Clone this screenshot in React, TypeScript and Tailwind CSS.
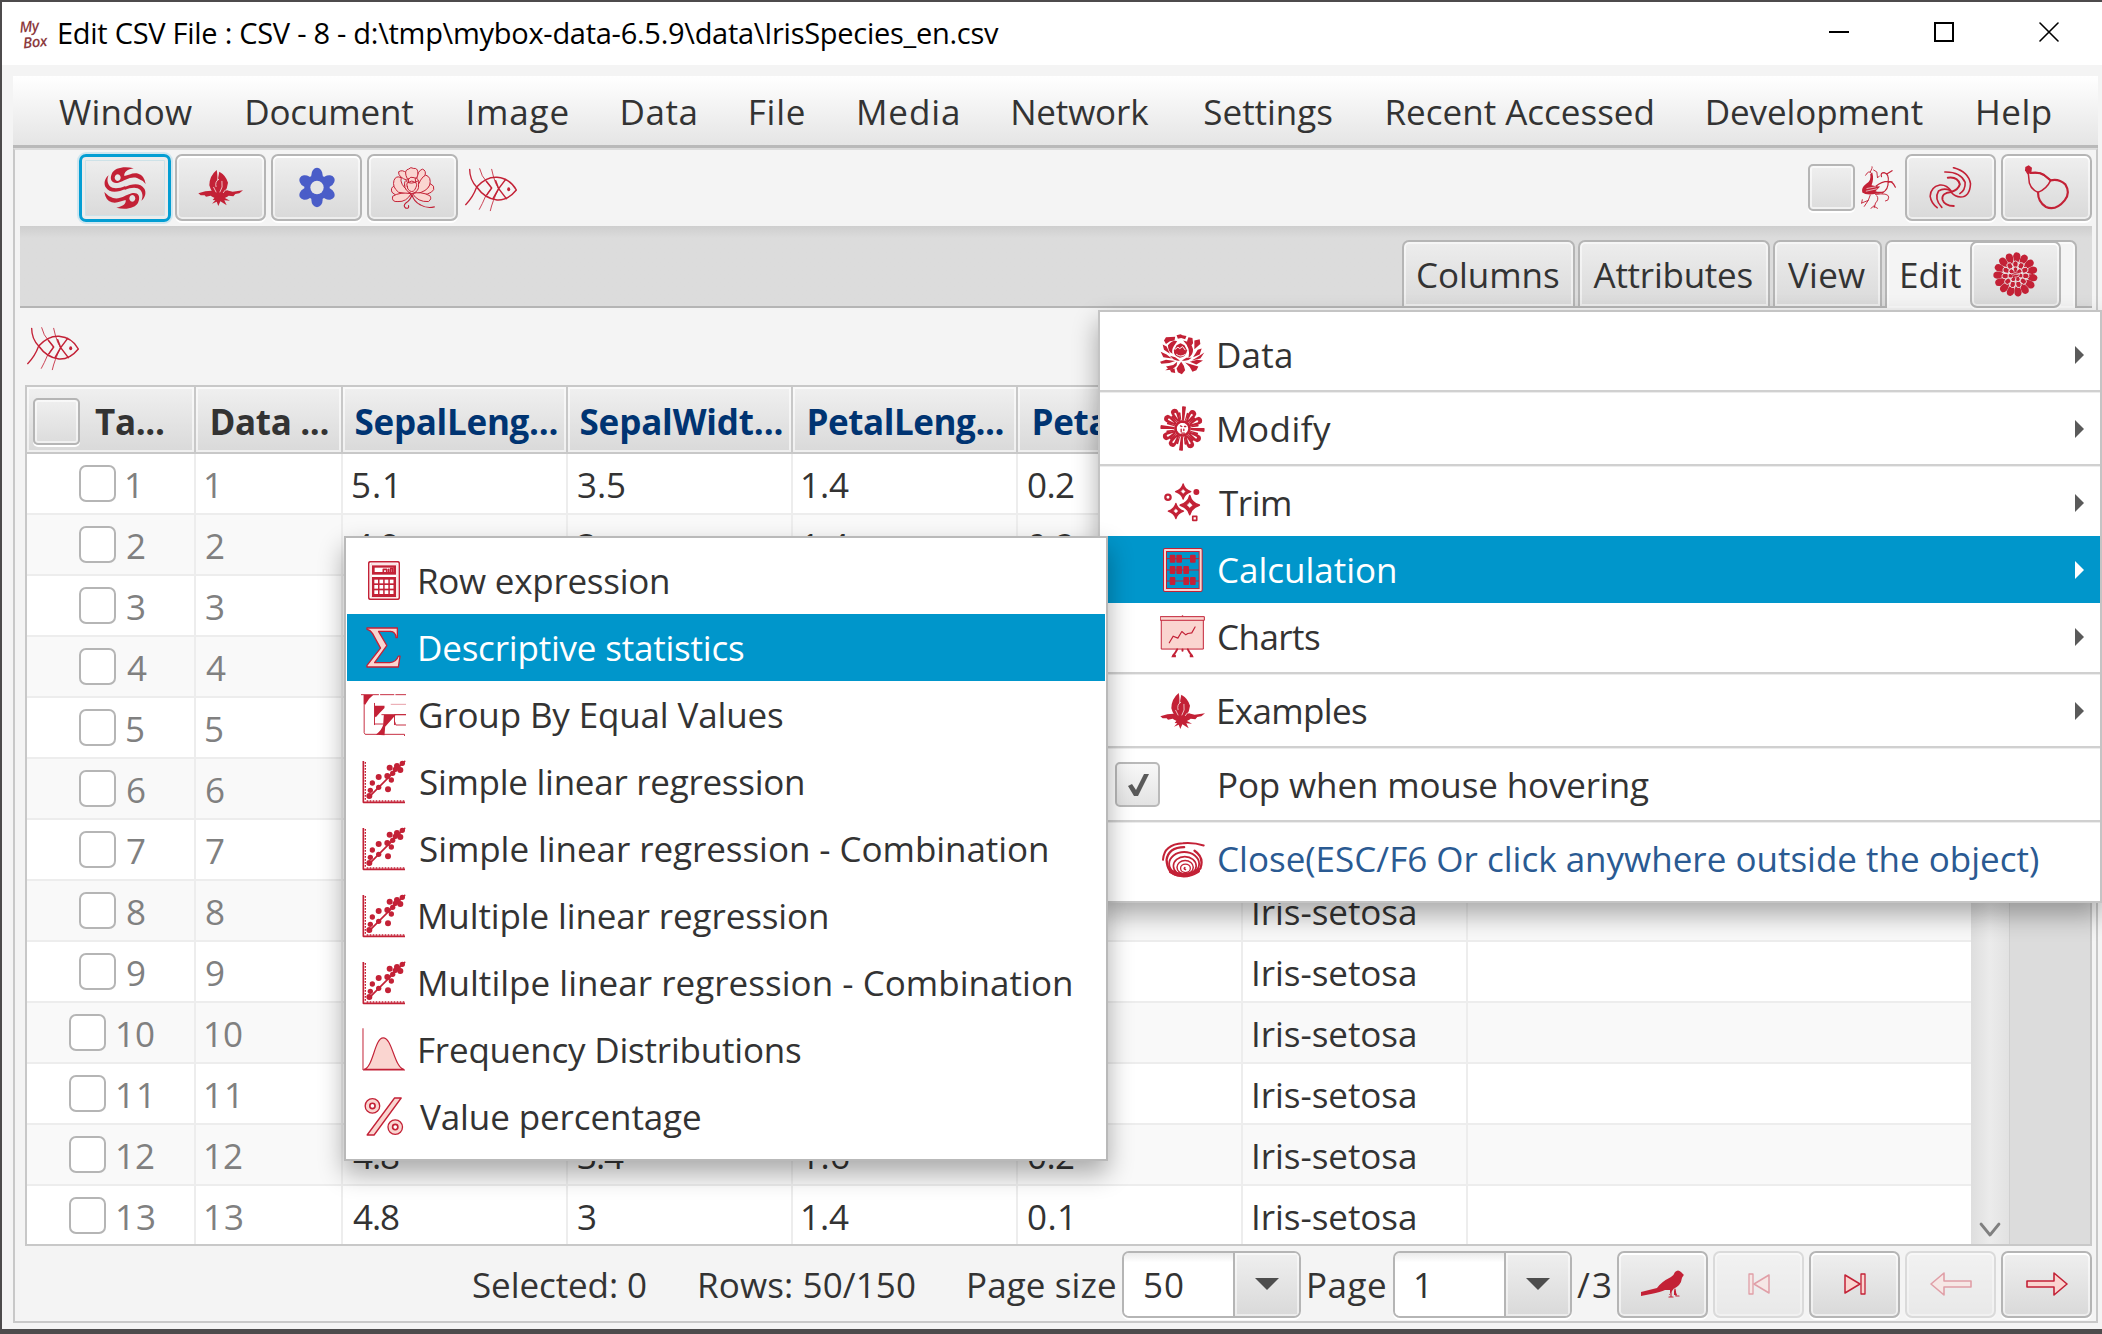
import React from "react";

const RED = "#c32136";
const PINK = "#fad5d0";
const FAMILY = '"Open Sans", "Noto Sans", sans-serif';

const measureContext = document.createElement("canvas").getContext("2d")!;

/** A single line of text whose inked width is fitted to `w` pixels. */
function T({ children, w, size = 35, bold = false }: { children: string; w: number; size?: number; bold?: boolean }) {
  measureContext.font = `${bold ? 700 : 400} ${size}px ${FAMILY}`;
  const m = measureContext.measureText(children);
  const ink = m.actualBoundingBoxLeft + m.actualBoundingBoxRight;
  const spacing = children.length > 1 ? (w - ink) / (children.length - 1) : 0;
  return (
    <span className="block shrink-0 whitespace-nowrap" style={{ width: w }}>
      <span
        className="block"
        style={{
          fontFamily: FAMILY,
          fontSize: size,
          fontWeight: bold ? 700 : 400,
          letterSpacing: spacing,
          marginLeft: m.actualBoundingBoxLeft,
        }}
      >
        {children}
      </span>
    </span>
  );
}

type IconProps = { className?: string };

function Svg({ box, className = "", children }: { box: string; className?: string; children: React.ReactNode }) {
  return (
    <svg viewBox={box} className={`shrink-0 ${className}`} fill="none" strokeLinecap="round" strokeLinejoin="round">
      {children}
    </svg>
  );
}

const SwirlFish = () => (
  <Svg box="0 0 132 132" className="h-[44px] w-[44px]">
    {[0, 180].map((a) => (
      <g key={a} transform={`rotate(${a} 66 66)`} fill={RED}>
        <path
          fillRule="evenodd"
          d="M92 7C66 0 34 4 26 24C18 44 30 54 46 50C66 44 82 30 102 36Q118 42 128 54Q124 28 106 23C88 19 78 28 64 30C62 18 74 10 92 7ZM44 25a9 10 0 1 0 .1 0Z"
        />
        <path d="M17 28C4 38 2 54 8 64C20 84 48 78 67 69V60C48 68 30 70 20 60C12 50 12 38 17 28Z" />
      </g>
    ))}
  </Svg>
);

const Leaf = ({ className = "h-[36px] w-[45px]" }: IconProps) => (
  <Svg box="0 0 135 108" className={className}>
    <g fill={RED}>
      <path d="M56 0Q34 18 34 46Q40 70 62 84Q86 70 90 38Q84 16 64 5L60 22Z" />
      <path d="M64 84Q52 58 40 62L22 64L1 70L8 76L20 76L24 80L38 77Q46 84 64 88Z" />
      <path d="M62 84Q80 56 92 62L104 65L135 61L124 70L112 72L106 79L92 77Q86 84 64 88Z" />
      <path d="M52 80L44 90L52 91L42 101L56 95L61 108L67 94L86 106L79 91L96 92L74 80Z" />
    </g>
    <path d="M60 6L59 30M54 50Q50 34 62 28M72 34Q76 52 66 66M54 66L47 52M82 60L76 68" stroke="#f4dcdc" strokeWidth="2.5" />
  </Svg>
);

const Gear = () => (
  <Svg box="0 0 108 122" className="h-[41px] w-[36px]">
    <g fill="#4a5dc8">
      {[0, 60, 120, 180, 240, 300].map((a) => (
        <ellipse key={a} transform={`rotate(${a} 54 61)`} cx="54" cy="24" rx="17" ry="22" />
      ))}
      <circle cx="54" cy="61" r="38" />
    </g>
    <circle cx="54" cy="61" r="20" fill="#e5e5e5" />
  </Svg>
);

const Peony = () => (
  <Svg box="0 0 136 126" className="h-[42px] w-[45px]">
    <g fill={PINK} stroke={RED} strokeWidth="3">
      <path d="M80 36Q84 10 98 6Q110 10 106 24Q104 40 84 50Z" />
      <path d="M52 40Q24 30 26 14Q38 6 50 18Q60 30 58 44Z" />
      <path d="M48 24Q44 8 56 6Q62-2 72 4Q82 2 84 14Q86 24 80 34L54 36Z" />
      <path d="M62 78Q24 80 14 56Q0 62 6 76Q22 94 62 84Z" />
      <path d="M80 76Q110 74 122 50Q136 56 132 68Q122 86 78 84Z" />
      <path d="M56 74Q28 50 34 32Q18 24 12 40Q6 60 26 76L60 82Z" />
      <path d="M78 72Q92 30 108 24Q126 30 120 54Q112 74 80 80Z" />
      <path d="M64 80Q30 74 8 88Q4 106 24 104Q50 106 64 80Z" />
      <path d="M68 80Q92 72 120 86Q128 96 116 104Q84 106 68 80Z" />
      <path d="M44 54Q42 40 54 38Q62 26 74 32Q90 34 86 52Q90 74 66 80Q44 72 44 54Z" />
      <path d="M52 58Q48 48 56 46Q66 38 76 46Q84 50 78 62Q72 78 60 72Q52 68 52 58Z" />
      <path d="M50 44Q64 54 84 42M56 46V36M78 46L76 34" fill="none" />
    </g>
    <path d="M66 82Q72 104 92 114Q112 126 134 120M66 84Q62 100 48 108Q38 118 48 124Q58 126 56 116" stroke={RED} strokeWidth="3.5" />
  </Svg>
);

const FishBone = () => (
  <Svg box="0 0 156 132" className="h-[44px] w-[52px]">
    <g stroke={RED}>
      <path d="M35 57Q64 26 96 28Q136 32 154 66Q128 98 96 96Q60 92 35 57Z" strokeWidth="4.5" />
      <path d="M35 57Q14 36 14 4M35 57Q24 88 2 110" strokeWidth="4" />
      <path d="M44 2Q50 26 64 40L80 60L62 84Q52 108 43 124" strokeWidth="2.5" />
      <path d="M80 4Q84 24 92 46L101 62Q82 100 76 128" strokeWidth="2.5" />
      <path d="M64 40L80 60L66 80M92 38L101 62L84 92M122 34L101 62L124 92" strokeWidth="4.5" />
    </g>
    <ellipse cx="131" cy="64" rx="4.5" ry="6" fill={RED} />
  </Svg>
);

const Phoenix = () => (
  <Svg box="0 0 110 130" className="h-[43px] w-[37px]">
    <path d="M30 24Q34 44 18 54Q2 66 6 80Q18 90 48 84Q64 84 72 76Q58 80 46 76L60 62Q50 62 34 58Q42 40 36 20Z" fill={RED} />
    <g stroke={RED} strokeWidth="2.8">
      <path d="M34 22Q26 10 16 28M30 18Q38 4 36 2M40 12L50 18L52 36L58 30" />
      <path d="M66 82Q86 70 84 48Q88 24 72 20Q60 20 64 32M80 24L96 14M84 50Q96 42 106 64M46 62Q70 42 96 48" strokeWidth="3.6" />
      <path d="M46 86Q84 80 86 94Q86 106 76 106M30 88L24 104L4 112M4 112L6 102M50 90Q58 100 46 112L42 126M42 120L32 128M42 122L52 128M24 104L12 122" />
    </g>
    <path d="M20 68L46 63M18 76L50 69" stroke="#f4f4f4" strokeWidth="2" />
  </Svg>
);

const Whirl = () => (
  <Svg box="0 0 128 126" className="h-[42px] w-[43px]">
    <g stroke={RED} strokeWidth="4.8">
      <path d="M73 2Q118 14 124 50Q122 90 94 90Q78 90 66 76" />
      <path d="M47 15Q94 14 108 46Q109 70 92 80" />
      <path d="M56 32Q86 28 92 52Q88 68 66 75" strokeWidth="6" />
      <path d="M66 72Q52 52 32 54Q4 60 3 88Q6 108 24 122" />
      <path d="M62 70Q44 62 28 72Q14 96 38 121" />
      <path d="M66 75Q36 78 40 98Q46 116 74 117" strokeWidth="5.5" />
    </g>
  </Svg>
);

const Gourd = () => (
  <Svg box="0 0 138 138" className="h-[46px] w-[46px]">
    <path d="M4 6L14 1L24 8L22 24L10 28L3 16Z" fill={RED} />
    <path d="M22 24Q48 22 60 30L80 46Q68 72 42 82Q22 74 16 54L13 26" stroke={RED} strokeWidth="4.5" />
    <path d="M20 24Q46 20 60 30L80 46M80 46Q104 40 124 58Q140 84 122 106Q96 138 66 126Q42 112 42 82" stroke={RED} strokeWidth="6.5" />
  </Svg>
);

const Mum = () => (
  <Svg box="0 0 136 136" className="h-[45px] w-[45px]">
    <g fill={RED}>
      {Array.from({ length: 15 }, (_, i) => (
        <path key={i} transform={`rotate(${i * 24 + 4} 68 68)`} d="M68 38Q57 26 57 12Q60 0 68 1Q78 1 79 12Q79 26 68 38Z" />
      ))}
      {Array.from({ length: 11 }, (_, i) => (
        <ellipse key={i} transform={`rotate(${i * 32.7} 68 68)`} cx="68" cy="37" rx="8.5" ry="10" stroke="#ececec" strokeWidth="2.5" />
      ))}
      {Array.from({ length: 7 }, (_, i) => (
        <ellipse key={i} transform={`rotate(${i * 51.4} 68 68)`} cx="68" cy="53" rx="7.5" ry="8" stroke="#ececec" strokeWidth="2.5" />
      ))}
      <circle cx="68" cy="68" r="10" />
    </g>
    <path d="M56 66Q66 58 80 66Q80 76 66 76M60 70Q68 66 76 68" stroke="#eee" strokeWidth="2" />
  </Svg>
);

const Rose = () => (
  <Svg box="0 0 136 124" className="h-[41px] w-[45px]">
    <g fill={RED}>
      <path d="M50 4L62 1L68 4L80 6L76 16L64 12L54 14Z" />
      <path d="M46 8L18 10L12 20L18 30L30 22L44 20Z" />
      <path d="M86 10Q76 32 88 44L100 28L98 12Z" />
      <path d="M104 20L120 16L122 30L104 46Z" />
      <path d="M24 34Q40 16 52 22L42 36Q34 48 38 60Q24 54 24 34Z" />
      <path d="M70 20Q94 24 100 46Q100 64 86 72Q94 44 70 20Z" />
      <path d="M50 34L62 28L74 34L82 50Q78 70 60 72Q40 66 42 50Z" />
      <path d="M8 32L20 38L30 60L12 48ZM2 54L20 62L36 74L10 70ZM0 84L18 78L46 82L28 88L4 90Z" />
      <path d="M126 44L114 48L100 70L120 62ZM134 56L110 72L96 80L122 74ZM130 80L112 78L90 84L110 92Z" />
      <path d="M30 66L46 70L60 80Q44 84 30 66ZM66 80L80 72L96 72Q84 84 66 80Z" />
      <path d="M52 84L40 94L18 98L24 104L16 110L36 108L50 96ZM58 92L64 84L72 96L76 110L66 122L54 116L50 104ZM76 86L90 100L98 114L110 110L116 98L100 94Z" />
      <path d="M30 108L44 104L46 118L34 116Z" />
    </g>
    <path d="M46 46L54 40L60 44L68 38L76 48M50 62Q62 72 76 62" stroke="#fff" strokeWidth="3" />
  </Svg>
);

const Daisy = () => (
  <Svg box="0 0 136 136" className="h-[45px] w-[45px]">
    {[0, 30, 60, 90, 120, 150, 180, 210, 240, 270, 300, 330].map((a, i) => (
      <g key={a} transform={`rotate(${a + 4} 68 68)`}>
        {i % 3 === 0 ? (
          <path d="M65 44L62 2Q68 0 74 2L71 44Z" fill={RED} />
        ) : (
          <>
            <path d="M64 44Q54 20 58 8Q68-2 78 8Q82 20 72 44Z" fill={RED} />
            <path d="M68 38L65 18Q68 12 71 18Z" fill="#fff" />
          </>
        )}
        <path transform="rotate(15 68 68)" d="M67 46L65 20Q68 16 71 20L69 46Z" fill={RED} />
      </g>
    ))}
    <circle cx="68" cy="68" r="21" stroke={RED} strokeWidth="8" strokeDasharray="9 3" />
    <circle cx="68" cy="68" r="15" fill="#fff" />
    <path d="M62 60L66 62M74 62H78M64 70V78M72 70V74M66 82H74" stroke={RED} strokeWidth="4" />
  </Svg>
);

const Sparkles = () => (
  <Svg box="0 0 112 118" className="h-[39px] w-[37px]">
    {[
      [58, 26, 1],
      [78, 67, 1.25],
      [36, 85, 1],
    ].map(([x, y, s]) => (
      <g key={x} transform={`translate(${x} ${y}) scale(${s})`}>
        <path d="M0-23Q4-6 23 0Q4 6 0 23Q-4 6-23 0Q-4-6 0-23Z" fill={RED} stroke={RED} strokeWidth="4" />
        <path d="M0-6L6 0L0 6L-6 0Z" fill="#fff" stroke="#fff" />
      </g>
    ))}
    <circle cx="12" cy="43" r="8" stroke={RED} strokeWidth="7" />
    <circle cx="98" cy="27" r="9" fill={RED} />
    <rect x="87" y="101" width="12" height="12" stroke={RED} strokeWidth="5" />
  </Svg>
);

const Abacus = () => (
  <Svg box="0 0 120 132" className="h-[44px] w-[40px]">
    <rect x="6" y="6" width="107" height="120" stroke={RED} strokeWidth="12" />
    <rect x="6" y="6" width="107" height="120" stroke={PINK} strokeWidth="6" />
    <path d="M12 32H107M12 66H107M12 99H107" stroke={RED} strokeWidth="3" />
    <g fill={RED}>
      {[
        [20, 20], [40, 20], [81, 20],
        [20, 54], [40, 54], [61, 54],
        [20, 87], [61, 87], [81, 87],
      ].map(([x, y]) => (
        <rect key={`${x}-${y}`} x={x} y={y} width="17" height="24" rx="3" />
      ))}
    </g>
  </Svg>
);

const Board = () => (
  <Svg box="0 0 136 130" className="h-[43px] w-[45px]">
    <path d="M66 1H70V5H66Z" fill={RED} />
    <rect x="5" y="12" width="126" height="91" fill={PINK} stroke={RED} strokeWidth="3" />
    <rect x="2" y="5" width="132" height="11" fill={PINK} stroke={RED} strokeWidth="3" />
    <path d="M28 84L40 64L54 70L66 50L78 60L84 56L96 54L106 36" stroke={RED} strokeWidth="3.5" />
    <path d="M52 104Q46 116 40 122M84 104Q90 116 96 122M68 104V108" stroke={RED} strokeWidth="6" />
    <path d="M34 128H48V120H38ZM90 120H98L102 128H90Z" fill={RED} />
  </Svg>
);

const Spiral = () => (
  <Svg box="0 0 132 110" className="h-[37px] w-[43px]">
    <g stroke={RED}>
      <path d="M3 56Q6 8 64 5Q98 2 128 12" strokeWidth="6" />
      <path d="M68 17Q20 18 14 56Q16 96 48 104Q96 110 118 82Q130 48 100 28" strokeWidth="7" />
      <ellipse cx="68" cy="68" rx="46" ry="36" strokeWidth="5.5" />
      <ellipse cx="70" cy="75" rx="35" ry="29" strokeWidth="5" />
      <ellipse cx="71" cy="79" rx="25" ry="21" strokeWidth="4.5" />
      <ellipse cx="72" cy="82" rx="15" ry="13" strokeWidth="4" />
      <path d="M72 86Q66 84 70 80" strokeWidth="5" />
      <path d="M28 92Q68 116 110 90" strokeWidth="13" />
    </g>
  </Svg>
);

const Calculator = () => (
  <Svg box="0 0 96 117" className="h-[39px] w-[32px]">
    <rect x="2" y="2" width="92" height="113" rx="6" fill="#fff" stroke={RED} strokeWidth="4.5" />
    <rect x="9" y="9" width="78" height="99" rx="2" stroke="#f3b5b8" strokeWidth="2" />
    <rect x="12" y="13" width="72" height="28" fill={RED} />
    <rect x="20" y="20" width="56" height="13" fill="#fff" />
    <path d="M46 32V25H56V32M62 32V25M68 32V22H74V32" stroke={RED} strokeWidth="5" />
    <rect x="12" y="48" width="72" height="60" fill={RED} />
    {[0, 1, 2].map((r) =>
      [0, 1, 2, 3].map((c) => <rect key={`${r}${c}`} x={19 + c * 15.5} y={56 + r * 16} width="11" height="11" fill="#fff" />)
    )}
  </Svg>
);

const Sigma = () => (
  <Svg box="0 0 106 124" className="h-[41px] w-[35px]">
    <path
      d="M3 3H95V32H91Q90 14 74 13H38L63 56L26 108H72Q92 106 98 88L103 88L98 121H3V116L44 64L20 20Q12 8 3 7Z"
      fill={PINK}
      stroke={RED}
      strokeWidth="4"
    />
  </Svg>
);

const Groups = () => (
  <Svg box="0 0 134 126" className="h-[42px] w-[45px]">
    <g stroke={RED} strokeWidth="2.8">
      <path d="M0 2H52M58 2H98M104 2H134M9 4V116L12 121H50M54 121H130V125M40 28V90H66M40 90V92M100 92V62H134M100 82L104 93H134M62 62H134" />
      <path d="M90 31H134" stroke="#e79aa2" />
    </g>
    <g fill={RED}>
      <path d="M8 3H36L24 14L12 32L8 30Z" />
      <path d="M40 35H70V42L56 56L44 70L40 66Z" />
      <path d="M68 62H104L90 78L72 98L70 124L44 122Q62 108 66 92Z" />
    </g>
  </Svg>
);

const Scatter = () => (
  <Svg box="0 0 132 132" className="h-[44px] w-[44px]">
    <path d="M4 3V127H129" stroke={RED} strokeWidth="5" strokeLinecap="butt" />
    <path d="M10 6V120M14 123H128" stroke={RED} strokeWidth="4" strokeDasharray="5 4" strokeLinecap="butt" />
    <path d="M20 112L128 4" stroke={RED} strokeWidth="5" />
    <g fill={RED}>
      {[
        [22, 108, 9], [25, 91, 8], [31, 69, 8], [50, 51, 9], [50, 82, 8], [78, 88, 9], [76, 48, 9], [83, 23, 9],
        [88, 60, 8], [92, 40, 8], [105, 18, 9], [115, 30, 9], [121, 10, 8], [100, 28, 8],
      ].map(([x, y, r]) => (
        <circle key={`${x}-${y}`} cx={x} cy={y} r={r} />
      ))}
    </g>
  </Svg>
);

const Bell = () => (
  <Svg box="0 0 130 130" className="h-[43px] w-[43px]">
    <path d="M6 125C34 120 38 30 64 30C92 30 96 116 126 125Z" fill={PINK} stroke={RED} strokeWidth="3.5" />
    <path d="M3 2V127H129" stroke={RED} strokeWidth="3" />
  </Svg>
);

const Percent = () => (
  <Svg box="0 0 120 118" className="h-[39px] w-[40px]">
    <g fill={PINK} stroke={RED} strokeWidth="4">
      <path d="M92 3H112L30 115H9Z" />
      <circle cx="25" cy="27" r="22" />
      <circle cx="94" cy="91" r="22" />
      <circle cx="25" cy="27" r="8" fill="#fff" strokeWidth="5" />
      <circle cx="94" cy="91" r="8" fill="#fff" strokeWidth="5" />
    </g>
  </Svg>
);

const Bird = () => (
  <Svg box="0 0 44 28" className="h-[28px] w-[44px]">
    <path
      d="M43 5L40 2Q37-1 34 2Q33 5 30 7Q20 12 16 18L0 22V26L10 24Q20 22 24 20H29V25H28M33 19V25H36M29 20Q37 18 40 12Q41 6 43 5Z"
      fill={RED}
    />
    <path d="M30 20V26M34 19L35 26M32 27H28M38 26H35" stroke={RED} strokeWidth="1.2" />
  </Svg>
);

const SkipLast = () => (
  <Svg box="0 0 22 22" className="h-[22px] w-[22px]">
    <path d="M1 2L16 11L1 20Z" fill={PINK} stroke={RED} strokeWidth="1.5" />
    <rect x="17" y="1" width="4" height="20" fill={PINK} stroke={RED} strokeWidth="1.3" />
  </Svg>
);

const Arrow = () => (
  <Svg box="0 0 42 26" className="h-[26px] w-[42px]">
    <path d="M1 10H28V2L41 13L28 24V16H1Z" fill={PINK} stroke={RED} strokeWidth="1.6" />
  </Svg>
);

const BUTTON =
  "flex h-[67px] w-[91px] shrink-0 items-center justify-center rounded-[7px] border-2 border-[#b5b5b5] bg-gradient-to-b from-[#efefef] to-[#d9d9d9] shadow-[inset_0_0_0_2px_rgba(255,255,255,0.55),inset_0_2px_0_white,0_2px_0_white]";

function IconButton({ children, disabled = false }: { children: React.ReactNode; disabled?: boolean }) {
  return (
    <button className={disabled ? `${BUTTON} opacity-40` : BUTTON}>{children}</button>
  );
}

const CHECK =
  "h-[47px] w-[47px] shrink-0 rounded-[5px] border-2 border-[#b5b5b5] bg-gradient-to-b from-[#efefef] to-[#dcdcdc] shadow-[inset_0_0_0_2px_rgba(255,255,255,0.6),0_2px_0_white]";

const MENU: [string, number][] = [
  ["Window", 133], ["Document", 166], ["Image", 99], ["Data", 73], ["File", 53], ["Media", 99],
  ["Network", 136], ["Settings", 128], ["Recent Accessed", 265], ["Development", 215], ["Help", 73],
];

const ROWS: { values: string[]; species: string }[] = [
  { values: ["5.1", "3.5", "1.4", "0.2"], species: "" },
  { values: ["4.9", "3", "1.4", "0.2"], species: "" },
  { values: ["", "", "", ""], species: "" },
  { values: ["", "", "", ""], species: "" },
  { values: ["", "", "", ""], species: "" },
  { values: ["", "", "", ""], species: "" },
  { values: ["", "", "", ""], species: "" },
  { values: ["", "", "", ""], species: "Iris-setosa" },
  { values: ["", "", "", ""], species: "Iris-setosa" },
  { values: ["", "", "", ""], species: "Iris-setosa" },
  { values: ["", "", "", ""], species: "Iris-setosa" },
  { values: ["4.8", "3.4", "1.6", "0.2"], species: "Iris-setosa" },
  { values: ["4.8", "3", "1.4", "0.1"], species: "Iris-setosa" },
];

const COLS = "grid grid-cols-[169px_147px_225px_225px_225px_225px_225px_503px]";

function numberWidth(s: string) {
  if (s === "1") return 10;
  if (s === "11") return 31;
  if (s.includes(".")) return s.endsWith("1") ? 42 : 46;
  return s.length === 2 ? 36 : 17;
}

function HeaderCell({ text, w, dark = false }: { text: string; w: number; dark?: boolean }) {
  return (
    <div className={`flex items-center justify-center border-r-2 border-[#c8c8c8] pt-[6px] pl-[3px] shadow-[inset_0_0_0_2px_rgba(255,255,255,0.6)] ${dark ? "text-[#333]" : "text-[#003472]"}`}>
      {text && <T w={w} bold>{text}</T>}
    </div>
  );
}

function DataTable() {
  return (
    <div className="h-[861px] w-[1985px] shrink-0 overflow-hidden border-2 border-r-0 border-[#c8c8c8] bg-white">
      <div className="flex">
        <div className="w-[1944px] shrink-0 overflow-hidden">
          <div className={`${COLS} h-[67px] border-b-2 border-[#c8c8c8] bg-gradient-to-b from-[#f0f0f0] to-[#d9d9d9]`}>
            <div className="flex items-center gap-[15px] border-r-2 border-[#c8c8c8] pt-[3px] pl-[6px] text-[#333] shadow-[inset_0_0_0_2px_rgba(255,255,255,0.6)]">
              <div className={CHECK} />
              <div className="pt-[3px]"><T w={68} bold>Ta...</T></div>
            </div>
            <HeaderCell text="Data ..." w={115} dark />
            <HeaderCell text="SepalLeng..." w={201} />
            <HeaderCell text="SepalWidt..." w={201} />
            <HeaderCell text="PetalLeng..." w={193} />
            <HeaderCell text="PetalWidt..." w={193} />
            <HeaderCell text="" w={0} />
            <HeaderCell text="" w={0} />
          </div>
          {ROWS.map(({ values, species }, i) => {
            const id = String(i + 1);
            return (
              <div key={id} className={`${COLS} h-[61px] leading-[57px] text-[#333] ${i % 2 ? "bg-[#f9f9f9]" : "bg-white"}`}>
                <div className={`flex items-center border-r-2 border-b-2 border-[#ededed] text-[#808080] ${id.length === 1 ? "gap-[11px] pl-[52px]" : "gap-[12px] pl-[42px]"}`}>
                  <div className="h-[37px] w-[37px] shrink-0 rounded-[7px] border-2 border-[#b5b5b5] bg-white" />
                  <div className="pt-[2px]"><T w={numberWidth(id)}>{id}</T></div>
                </div>
                <div className="border-r-2 border-b-2 border-[#ededed] pt-[2px] pl-[10px] text-[#808080]">
                  <T w={numberWidth(id)}>{id}</T>
                </div>
                {values.map((v, c) => (
                  <div key={c} className="border-r-2 border-b-2 border-[#ededed] pt-[2px] pl-[10px]">
                    {v && <T w={numberWidth(v)}>{v}</T>}
                  </div>
                ))}
                <div className="border-r-2 border-b-2 border-[#ededed] pt-[2px] pl-[11px]">
                  {species && <T w={161}>{species}</T>}
                </div>
                <div className="border-b-2 border-[#ededed]" />
              </div>
            );
          })}
        </div>
        <div className="flex h-[857px] w-[39px] shrink-0 items-end justify-center border-r border-[#d0d0d0] bg-gradient-to-r from-[#dedede] via-[#ebebeb] to-[#e2e2e2] pb-[6px]">
          <Svg box="0 0 22 16" className="h-[16px] w-[22px]">
            <path d="M2 2L11 13L20 2" stroke="#808080" strokeWidth="2.8" />
          </Svg>
        </div>
      </div>
    </div>
  );
}

function Combo({ value, w }: { value: string; w: number }) {
  return (
    <div className="flex h-[67px] w-[179px] shrink-0 overflow-hidden rounded-[7px] border-2 border-[#b5b5b5] bg-white shadow-[0_2px_0_white]">
      <div className="flex w-[109px] items-center bg-gradient-to-b from-[#ebebeb] via-white via-15% to-white pt-[2px] pl-[21px]">
        <T w={w}>{value}</T>
      </div>
      <div className="flex flex-1 items-center justify-center border-l-2 border-[#b5b5b5] bg-gradient-to-b from-[#efefef] to-[#d9d9d9] shadow-[inset_0_0_0_2px_rgba(255,255,255,0.5)]">
        <Svg box="0 0 24 12" className="h-[12px] w-[24px]">
          <path d="M0 0H24L12 12Z" fill="#4d4d4d" />
        </Svg>
      </div>
    </div>
  );
}

const TAB = "flex h-[66px] items-center rounded-t-[7px] border-2 border-b-0 border-[#b5b5b5] shadow-[inset_0_0_0_2px_rgba(255,255,255,0.5)]";

type Entry = { icon: React.ReactNode; text: string; w: number; active?: boolean };

const SUBMENU: Entry[] = [
  { icon: <Calculator />, text: "Row expression", w: 248 },
  { icon: <Sigma />, text: "Descriptive statistics", w: 324, active: true },
  { icon: <Groups />, text: "Group By Equal Values", w: 363 },
  { icon: <Scatter />, text: "Simple linear regression", w: 383 },
  { icon: <Scatter />, text: "Simple linear regression - Combination", w: 627 },
  { icon: <Scatter />, text: "Multiple linear regression", w: 407 },
  { icon: <Scatter />, text: "Multilpe linear regression - Combination", w: 651 },
  { icon: <Bell />, text: "Frequency Distributions", w: 381 },
  { icon: <Percent />, text: "Value percentage", w: 280 },
];

function MenuRow({ icon, text, w, active = false }: Entry) {
  return (
    <div className={`flex h-[67px] items-center pr-[16px] leading-[67px] ${active ? "bg-[#0096cb] text-white" : "text-[#333]"}`}>
      <div className="ml-[60px] flex w-[45px] shrink-0 items-center justify-center">{icon}</div>
      <div className="ml-[14px] flex-1">
        <T w={w}>{text}</T>
      </div>
      <Svg box="0 0 9 18" className="h-[18px] w-[9px]">
        <path d="M0 0L9 9L0 18Z" fill={active ? "#fff" : "#5a5a5a"} />
      </Svg>
    </div>
  );
}

const Separator = () => (
  <div className="h-[7px] pt-[2px]">
    <div className="h-[3px] border-b border-[#ececec] bg-[#d0d0d0]" />
  </div>
);

export default function App() {
  return (
    <div className="relative h-[1334px] w-[2102px] overflow-hidden bg-[#4d4b4c] pt-[2px] pl-[2px] text-[#333]">
      <div className="flex h-[1327px] w-[2100px] flex-col bg-[#f4f4f4]">
        <header className="flex h-[63px] shrink-0 items-center bg-white text-black">
          <div className="mb-[2px] ml-[18px] flex w-[32px] -rotate-6 flex-col font-['Open_Sans'] text-[15px] leading-[16px] font-semibold tracking-[-0.5px] text-[#8c3b3f] italic">
            <span>My</span>
            <span className="pl-[2px]">Box</span>
          </div>
          <div className="ml-[7px] pb-[2px] leading-[60px]">
            <T w={940} size={29}>{"Edit CSV File : CSV - 8 - d:\\tmp\\mybox-data-6.5.9\\data\\IrisSpecies_en.csv"}</T>
          </div>
          <div className="mr-[43px] ml-auto flex items-center gap-[85px] pb-[3px]">
            <div className="h-[2px] w-[20px] bg-black" />
            <div className="h-[20px] w-[20px] border-2 border-black" />
            <Svg box="0 0 20 20" className="h-[20px] w-[20px]">
              <path d="M1 1L19 19M19 1L1 19" stroke="#000" strokeWidth="1.6" />
            </Svg>
          </div>
        </header>

        <nav className="mt-[11px] ml-[11px] flex h-[72px] w-[2085px] shrink-0 items-center justify-between border-b-3 border-[#b9b9b9] bg-gradient-to-b from-white to-[#e5e5e5] pt-[3px] pr-[47px] pl-[46px]">
          {MENU.map(([label, w]) => (
            <T key={label} w={w}>{label}</T>
          ))}
        </nav>

        <main className="ml-[11px] flex h-[1175px] w-[2085px] shrink-0 flex-col border-2 border-[#c8c8c8] border-t-[#dcdcdc] pr-[4px] pl-[5px]">
          <div className="flex h-[76px] shrink-0 items-center gap-[5px] pb-px pl-[59px]">
            <button className="-mr-px flex h-[68px] w-[92px] shrink-0 items-center justify-center rounded-[7px] border-3 border-[#039ed3] bg-gradient-to-b from-[#efefef] to-[#d9d9d9] shadow-[0_0_0_2px_#cfe6ef,inset_0_0_0_3px_#ececec,inset_0_0_0_4px_#cde2e8]">
              <SwirlFish />
            </button>
            <IconButton><Leaf /></IconButton>
            <IconButton><Gear /></IconButton>
            <IconButton><Peony /></IconButton>
            <div className="ml-[2px] pt-[4px]"><FishBone /></div>
            <div className={`${CHECK} ml-auto`} />
            <div className="mr-[3px]"><Phoenix /></div>
            <IconButton><Whirl /></IconButton>
            <IconButton><Gourd /></IconButton>
          </div>

          <div className="flex h-[82px] shrink-0 items-end justify-end gap-[3px] border-b-2 border-[#b5b5b5] bg-gradient-to-b from-[#cecece] via-[#dcdcdc] via-15% to-[#dcdcdc] pr-[15px]">
            <div className={`${TAB} w-[173px] justify-center bg-gradient-to-b from-[#ededed] to-[#dadada] pt-[2px]`}><T w={141}>Columns</T></div>
            <div className={`${TAB} w-[192px] justify-center bg-gradient-to-b from-[#ededed] to-[#dadada] pt-[2px] pr-[2px]`}><T w={159}>Attributes</T></div>
            <div className={`${TAB} w-[109px] justify-center bg-gradient-to-b from-[#ededed] to-[#dadada] pt-[2px] pr-[2px]`}><T w={77}>View</T></div>
            <div className={`${TAB} -mb-[2px] h-[68px] w-[192px] items-end bg-[#f4f4f4] pl-[15px]`}>
              <div className="pb-[7px]"><T w={59}>Edit</T></div>
              <div className="ml-[9px]"><IconButton><Mum /></IconButton></div>
            </div>
          </div>

          <div className="flex h-[77px] shrink-0 items-center pt-[5px] pl-[7px]">
            <FishBone />
          </div>

          <div className="flex h-[861px] shrink-0 pl-[5px]">
            <DataTable />
            <div className="flex-1 border-r-2 border-b-2 border-[#c8c8c8] bg-[#dcdcdc]" />
          </div>

          <footer className="flex h-[75px] shrink-0 items-center justify-end gap-[5px] pt-[1px]">
            <div className="pt-[2px]"><T w={173}>Selected: 0</T></div>
            <div className="ml-[49px] pt-[2px]"><T w={215}>Rows: 50/150</T></div>
            <div className="ml-[49px] pt-[2px]"><T w={146}>Page size</T></div>
            <div className="ml-[2px]"><Combo value="50" w={38} /></div>
            <div className="ml-[3px] pt-[2px]"><T w={76}>Page</T></div>
            <div className="ml-[3px]"><Combo value="1" w={10} /></div>
            <div className="pt-[2px]"><T w={33}>/3</T></div>
            <div className="ml-[2px]"><IconButton><Bird /></IconButton></div>
            <IconButton disabled><span className="rotate-180"><SkipLast /></span></IconButton>
            <IconButton><SkipLast /></IconButton>
            <IconButton disabled><span className="rotate-180"><Arrow /></span></IconButton>
            <IconButton><Arrow /></IconButton>
          </footer>
        </main>
      </div>

      <div className="absolute top-[310px] left-[1098px] h-[593px] w-[1004px] border-2 border-[#c4c4c4] bg-white pt-[9px] shadow-[0_12px_24px_rgba(0,0,0,0.32)]">
        <MenuRow icon={<Rose />} text="Data" w={72} />
        <Separator />
        <MenuRow icon={<Daisy />} text="Modify" w={112} />
        <Separator />
        <MenuRow icon={<Sparkles />} text="Trim" w={71} />
        <MenuRow icon={<Abacus />} text="Calculation" w={176} active />
        <MenuRow icon={<Board />} text="Charts" w={101} />
        <Separator />
        <MenuRow icon={<Leaf />} text="Examples" w={148} />
        <Separator />
        <div className="flex h-[67px] items-center pl-[15px] leading-[67px]">
          <div className="flex h-[45px] w-[45px] items-center justify-center rounded-[5px] border-2 border-[#b9b9b9] bg-gradient-to-b from-[#f8f8f8] to-[#e3e3e3]">
            <Svg box="0 0 22 24" className="h-[24px] w-[22px]">
              <path d="M1 13L5 11L9 17L17 1H22L11 23H7Z" fill="#5a5a5a" />
            </Svg>
          </div>
          <div className="ml-[60px]"><T w={429}>Pop when mouse hovering</T></div>
        </div>
        <Separator />
        <div className="flex h-[67px] items-center pl-[60px] leading-[67px] text-[#2a5a92]">
          <div className="flex w-[45px] justify-end pt-[2px]"><Spiral /></div>
          <div className="ml-[14px]"><T w={819}>Close(ESC/F6 Or click anywhere outside the object)</T></div>
        </div>
      </div>

      <div className="absolute top-[536px] left-[344px] h-[625px] w-[764px] border-2 border-[#b9b9b9] bg-white px-px pt-[9px] shadow-[0_12px_24px_rgba(0,0,0,0.32)]">
        {SUBMENU.map(({ icon, text, w, active }) => (
          <div key={text} className={`flex h-[67px] items-center leading-[67px] ${active ? "bg-[#0096cb] text-white" : "text-[#333]"}`}>
            <div className="ml-[14px] flex w-[45px] shrink-0 items-center justify-center">{icon}</div>
            <div className="ml-[14px]"><T w={w}>{text}</T></div>
          </div>
        ))}
      </div>
    </div>
  );
}
